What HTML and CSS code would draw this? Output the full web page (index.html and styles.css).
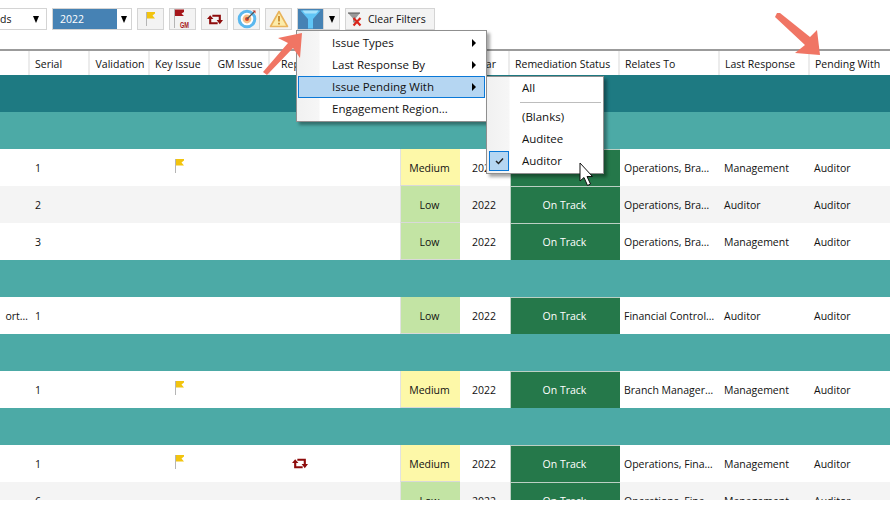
FILE: index.html
```html
<!DOCTYPE html>
<html lang="en">
<head>
<meta charset="utf-8">
<title>Issues</title>
<link rel="stylesheet" href="styles.css">
</head>
<body>
<svg class="defs" width="0" height="0" aria-hidden="true">
  <defs>
    <g id="flag"><path d="M0.5 0V14" stroke="#b5b5b5" stroke-width="1" fill="none"/><path d="M1 0H9V1.500L6.500 3.500L9 6.500H1Z" fill="#f2c40f"/></g>
    <g id="repeat"><path d="M3 3V8.500H10M12 7V1.500H5" fill="none" stroke="#8e0c0c" stroke-width="2"/><path d="M0 4.500L3 1L6 4.500ZM9 5.500H15L12 9.500Z" fill="#8e0c0c"/></g>
  </defs>
</svg>
<div class="page">
  <div class="toolbar">
    <div class="combo combo-period"><span class="combo-text">ds</span><span class="caret"></span></div>
    <div class="combo combo-year"><span class="combo-text">2022</span><span class="combo-drop"><span class="caret"></span></span></div>
    <button class="tool"><svg width="12" height="16" viewBox="0 0 12 16"><use href="#flag" transform="translate(1 1)"/></svg></button>
    <button class="tool"><svg width="22" height="20" viewBox="0 0 22 20"><path d="M2.500 0V19" stroke="#b5b5b5"/><path d="M3 0.500H12V3L9.500 4.500L12 7H3Z" fill="#a5161a"/><text transform="translate(8 18.500) scale(0.8 1.300)" class="gm-text">GM</text></svg></button>
    <button class="tool"><svg width="16" height="11" viewBox="0 0 15 10"><use href="#repeat"/></svg></button>
    <button class="tool"><svg width="20" height="20" viewBox="0 0 20 20"><circle cx="10" cy="10" r="7.800" fill="#fff" stroke="#5bb8ee" stroke-width="3"/><circle cx="10" cy="10" r="4.400" fill="#f4c088"/><circle cx="10" cy="10" r="2" fill="#d8402a"/><path d="M10 10L17 3" stroke="#555" stroke-width="1.200"/><path d="M15.500 1.500L18.500 1.500L18.500 4.500Z" fill="#c0392b"/></svg></button>
    <button class="tool"><svg width="20" height="18" viewBox="0 0 20 18"><path d="M10 1.500L18.500 16.500H1.500Z" fill="#fcecaa" stroke="#e9b45c" stroke-width="1.600" stroke-linejoin="round"/><path d="M10 6V11.500" stroke="#c98a2a" stroke-width="1.800"/><path d="M10 12.800V14.500" stroke="#c98a2a" stroke-width="1.800"/></svg></button>
    <div class="split">
      <button class="tool tool-active"><svg width="21" height="19" viewBox="0 0 21 19"><path d="M0.500 0.500H20.500L13 9V18.500H8V9Z" fill="#60c5f6"/><path d="M2.500 0.500H18.500L16 3.500H5Z" fill="#a5e2fb"/></svg></button>
      <button class="tool-arrow"><span class="caret"></span></button>
    </div>
    <button class="tool tool-clear"><svg width="16" height="16" viewBox="0 0 16 16"><path d="M1 2H13L8.500 7.500V13L6 11V7.500Z" fill="#9a9a9a"/><path d="M1 2H13" stroke="#555"/><path d="M6.500 7L13.500 14.500M13.500 7L6.500 14.500" stroke="#d9261c" stroke-width="2.200"/></svg><span>Clear Filters</span></button>
  </div>

  <div class="grid-head">
    <div class="hcell"></div>
    <div class="hcell">Serial</div>
    <div class="hcell hcell-center">Validation</div>
    <div class="hcell">Key Issue</div>
    <div class="hcell hcell-center">GM Issue</div>
    <div class="hcell hcell-repeat">Repeat</div>
    <div class="hcell"></div>
    <div class="hcell">Priority</div>
    <div class="hcell hcell-center">Year</div>
    <div class="hcell">Remediation Status</div>
    <div class="hcell">Relates To</div>
    <div class="hcell">Last Response</div>
    <div class="hcell">Pending With</div>
  </div>

  <div class="band band-dark"></div>
  <div class="band"></div>
  <div class="row">
    <div class="cell"></div><div class="cell">1</div><div class="cell"></div>
    <div class="cell cell-icon"><svg width="10" height="15" viewBox="0 0 10 15"><use href="#flag"/></svg></div>
    <div class="cell"></div><div class="cell"></div><div class="cell"></div>
    <div class="cell cell-level level-medium">Medium</div><div class="cell cell-year">2022</div><div class="cell cell-status">On Track</div>
    <div class="cell">Operations, Bra…</div><div class="cell">Management</div><div class="cell">Auditor</div>
  </div>
  <div class="row row-alt">
    <div class="cell"></div><div class="cell">2</div><div class="cell"></div><div class="cell"></div><div class="cell"></div><div class="cell"></div><div class="cell"></div>
    <div class="cell cell-level level-low">Low</div><div class="cell cell-year">2022</div><div class="cell cell-status">On Track</div>
    <div class="cell">Operations, Bra…</div><div class="cell">Auditor</div><div class="cell">Auditor</div>
  </div>
  <div class="row">
    <div class="cell"></div><div class="cell">3</div><div class="cell"></div><div class="cell"></div><div class="cell"></div><div class="cell"></div><div class="cell"></div>
    <div class="cell cell-level level-low">Low</div><div class="cell cell-year">2022</div><div class="cell cell-status">On Track</div>
    <div class="cell">Operations, Bra…</div><div class="cell">Management</div><div class="cell">Auditor</div>
  </div>
  <div class="band"></div>
  <div class="row">
    <div class="cell cell-cut"><span>ort…</span></div><div class="cell">1</div><div class="cell"></div><div class="cell"></div><div class="cell"></div><div class="cell"></div><div class="cell"></div>
    <div class="cell cell-level level-low">Low</div><div class="cell cell-year">2022</div><div class="cell cell-status">On Track</div>
    <div class="cell">Financial Control…</div><div class="cell">Auditor</div><div class="cell">Auditor</div>
  </div>
  <div class="band"></div>
  <div class="row">
    <div class="cell"></div><div class="cell">1</div><div class="cell"></div>
    <div class="cell cell-icon"><svg width="10" height="15" viewBox="0 0 10 15"><use href="#flag"/></svg></div>
    <div class="cell"></div><div class="cell"></div><div class="cell"></div>
    <div class="cell cell-level level-medium">Medium</div><div class="cell cell-year">2022</div><div class="cell cell-status">On Track</div>
    <div class="cell">Branch Manager…</div><div class="cell">Management</div><div class="cell">Auditor</div>
  </div>
  <div class="band"></div>
  <div class="row">
    <div class="cell"></div><div class="cell">1</div><div class="cell"></div>
    <div class="cell cell-icon"><svg width="10" height="15" viewBox="0 0 10 15"><use href="#flag"/></svg></div>
    <div class="cell"></div>
    <div class="cell cell-icon cell-repeat"><svg width="16" height="11" viewBox="0 0 15 10"><use href="#repeat"/></svg></div>
    <div class="cell"></div>
    <div class="cell cell-level level-medium">Medium</div><div class="cell cell-year">2022</div><div class="cell cell-status">On Track</div>
    <div class="cell">Operations, Fina…</div><div class="cell">Management</div><div class="cell">Auditor</div>
  </div>
  <div class="row row-alt">
    <div class="cell"></div><div class="cell">6</div><div class="cell"></div><div class="cell"></div><div class="cell"></div><div class="cell"></div><div class="cell"></div>
    <div class="cell cell-level level-low">Low</div><div class="cell cell-year">2022</div><div class="cell cell-status">On Track</div>
    <div class="cell">Operations, Fina…</div><div class="cell">Management</div><div class="cell">Auditor</div>
  </div>
</div>

<div class="menu menu-main">
  <div class="item"><span>Issue Types</span><i class="sub-arrow"></i></div>
  <div class="item"><span>Last Response By</span><i class="sub-arrow"></i></div>
  <div class="item item-on"><span>Issue Pending With</span><i class="sub-arrow"></i></div>
  <div class="item"><span>Engagement Region...</span></div>
</div>
<div class="menu menu-sub">
  <div class="item"><span>All</span></div>
  <div class="sep"></div>
  <div class="item"><span>(Blanks)</span></div>
  <div class="item"><span>Auditee</span></div>
  <div class="item"><span>Auditor</span><span class="check"><svg width="9" height="8" viewBox="0 0 9 8"><path d="M1 4L3.500 6.500L8 1.500" fill="none" stroke="#222" stroke-width="1.500"/></svg></span></div>
</div>

<svg class="arrow arrow-a" width="44" height="46" viewBox="0 0 44 46"><path d="M16 6L40 1L38 26L31 16L5 43L1 40L26 11Z" fill="#f07564"/></svg>
<svg class="arrow arrow-b" width="48" height="44" viewBox="0 0 48 44"><path d="M2 1L5 1L35 25L42 18L45 43L20 41L30 33L0 5Z" fill="#f07564"/></svg>
<svg class="cursor" width="16" height="25" viewBox="0 0 16 25"><path d="M1 1V19L5 15.500L8.500 23.500L11.500 22L8 14.500H13.500Z" fill="#fff" stroke="#111" stroke-width="1"/></svg>
</body>
</html>
```

FILE: styles.css
```css
* { box-sizing: border-box; }
html, body { margin: 0; padding: 0; background: #fff; }
body {
  width: 890px;
  height: 512px;
  overflow: hidden;
  position: relative;
  font-family: "Open Sans", "Noto Sans", sans-serif;
  font-size: 10.5px;
  color: #111;
}
.defs { position: absolute; }
.page { height: 500px; overflow: hidden; }

.toolbar {
  height: 51px;
  border-bottom: 2px solid #9b9b9b;
  display: flex;
  align-items: flex-start;
  padding-top: 8px;
  gap: 5px;
}
.combo {
  height: 22px;
  display: flex;
  align-items: center;
  border: 1px solid #d4d4d4;
  background: #f1f1f1;
}
.combo-period { width: 47px; border-left: 0; justify-content: space-between; padding-right: 7px; background: #fff; }
.combo-year { width: 80px; background: #fff; }
.combo-year .combo-text { width: 64px; height: 20px; line-height: 20px; padding-left: 7px; background: #4682b4; color: #fff; }
.combo-drop { flex: 1; display: flex; justify-content: center; }
.caret { width: 0; height: 0; border-left: 3.500px solid transparent; border-right: 3.500px solid transparent; border-top: 7px solid #000; }
.tool {
  width: 27px;
  height: 22px;
  padding: 0;
  border: 1px solid #d4d4d4;
  background: #f3f3f3;
  display: flex;
  align-items: center;
  justify-content: center;
  font: inherit;
  color: inherit;
}
.gm-text { font-family: "Liberation Sans", sans-serif; font-size: 7px; font-weight: 700; fill: #a5161a; }
.split { display: flex; }
.tool-active { background: #4682b4; }
.tool-arrow {
  width: 16px;
  height: 22px;
  padding: 0;
  border: 1px solid #d4d4d4;
  border-left: 0;
  background: #f3f3f3;
  display: flex;
  align-items: center;
  justify-content: center;
}
.tool-clear { width: 90px; gap: 5px; justify-content: flex-start; padding-left: 1px; }

.grid-head, .row {
  display: grid;
  grid-template-columns: 30px 60px 60px 60px 60px 60px 70px 60px 50px 110px 100px 90px 80px;
}
.grid-head { height: 24px; }
.hcell {
  border-right: 2px solid #ececec;
  padding-left: 5px;
  line-height: 26px;
  white-space: nowrap;
  overflow: hidden;
}
.hcell-center { text-align: center; padding-left: 2px; }
.hcell-repeat { border-right: 0; padding-left: 11px; }
.hcell:last-child { border-right: 0; }
.band { height: 37px; background: #4caaa6; }
.band-dark { background: #1e7a82; }
.row { height: 37px; background: #fff; }
.row-alt { background: #f4f4f4; }
.cell {
  padding-left: 4px;
  padding-top: 1px;
  line-height: 37px;
  white-space: nowrap;
  overflow: hidden;
}
.cell:nth-child(2) { padding-left: 5px; }
.cell-icon { display: flex; justify-content: center; align-items: flex-start; padding: 10px 0 0; }
.cell-repeat { padding-top: 13px; }
.cell-cut { padding: 1px 2px 0 0; display: flex; justify-content: flex-end; }
.cell-level, .cell-year, .cell-status { text-align: center; padding-left: 0; }
.cell-level, .cell-year, .cell-status { padding-right: 2px; }
.cell-level { border-left: 1px solid #e2e2e2; border-bottom: 1px solid #d9d9d9; }
.level-medium { background: #fdf8a8; }
.level-low { background: #c3e4a4; }
.cell-status { background: #25784a; color: #fff; border: 1px solid #bcd0c4; border-right: 0; border-bottom: 0; padding-top: 0; }

.menu {
  position: absolute;
  background: #fff;
  border: 1px solid #8f8f8f;
  box-shadow: 3px 3px 3px rgba(0, 0, 0, 0.35);
  font-size: 11.5px;
  padding: 1px;
  background-image: linear-gradient(90deg, #f1f1f1 0, #f6f6f6 22px, #fff 23px);
  background-repeat: no-repeat;
}
.menu-main { left: 296px; top: 30px; width: 191px; height: 92px; }
.menu-sub { left: 486px; top: 76px; width: 118px; height: 98px; padding-top: 0; }
.item {
  position: relative;
  height: 22px;
  line-height: 21px;
  padding-left: 34px;
  white-space: nowrap;
}
.item-on { background: #b5d6f2; box-shadow: inset 0 0 0 1px #0a78d7; }
.sub-arrow {
  position: absolute;
  right: 9px;
  top: 7px;
  border-top: 4px solid transparent;
  border-bottom: 4px solid transparent;
  border-left: 4px solid #000;
}
.sep { height: 1px; background: #bdbdbd; margin: 3px 1px 3px 32px; }
.check {
  position: absolute;
  left: 1px;
  top: 1px;
  width: 20px;
  height: 20px;
  background: #b5d6f2;
  border: 1px solid #0a78d7;
  display: flex;
  align-items: center;
  justify-content: center;
}
.arrow, .cursor { position: absolute; }
.arrow-a { left: 262px; top: 32px; }
.arrow-b { left: 775px; top: 12px; }
.cursor { left: 579px; top: 162px; }
```
